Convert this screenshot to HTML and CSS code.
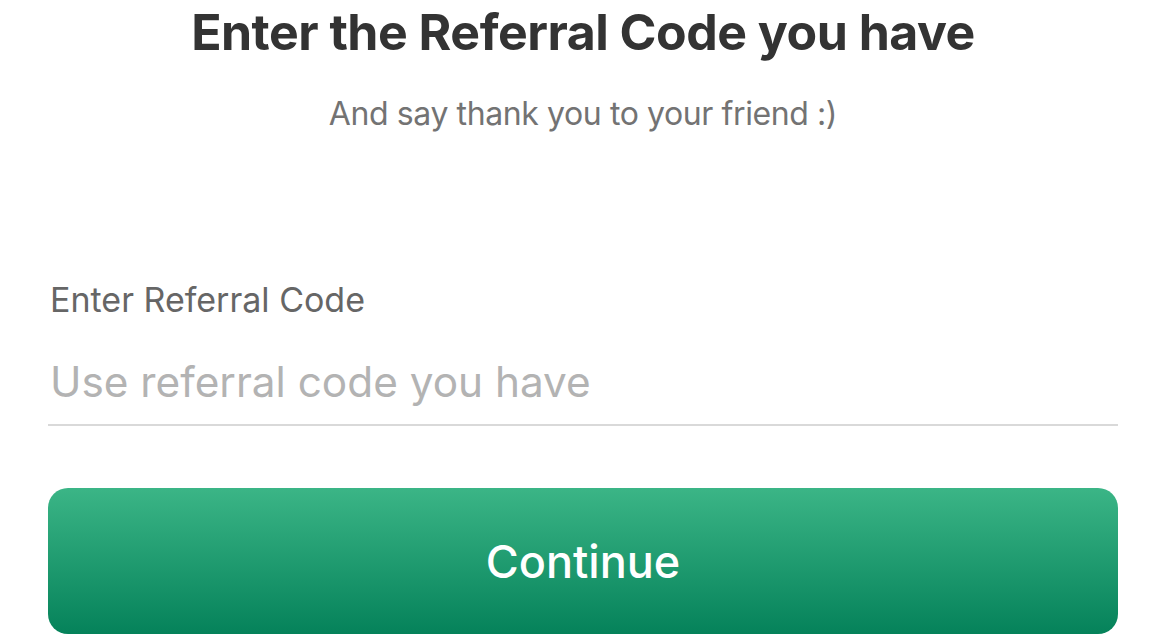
FILE: index.html
```html
<!DOCTYPE html>
<html>
    <head>
        <title>Referral Code</title>
        <link rel="stylesheet" href="styles.css">
    </head>
    <body>
        <main class="referral">
            <div class="referral-head">
                <h1 class="referral-title">Enter the Referral Code you have</h1>
                <p class="referral-subtitle">And say thank you to your friend :)</p>
            </div>
            <form class="referral-form">
                <label class="field">
                    <span class="field-label">Enter Referral Code</span>
                    <input class="field-input" type="text" placeholder="Use referral code you have">
                </label>
                <button class="btn-continue" type="button">Continue</button>
            </form>
        </main>
    </body>
</html>
```

FILE: styles.css
```css
:root {
    --text-dark: #333333;
    --text-muted: #737373;
    --text-label: #666666;
    --text-hint: #b3b3b3;
    --line: #d9d9d9;
    --green-top: #3bb586;
    --green-bottom: #05825a;
}

*, *::before, *::after {
    box-sizing: border-box;
}

body {
    margin: 0px;
    background-color: #ffffff;
    font-family: "Inter", "Roboto", sans-serif;
    color: var(--text-dark);
}

.referral {
    display: flex;
    flex-direction: column;
    padding: 0px 52px 0px 48px;
}

.referral-head {
    display: flex;
    flex-direction: column;
    align-items: center;
    text-align: center;
}

.referral-title {
    margin: 2px 0px 0px;
    font-size: 50px;
    font-weight: 700;
    line-height: 60px;
    letter-spacing: -0.5px;
}

.referral-subtitle {
    margin: 32px 0px 0px;
    font-size: 32px;
    line-height: 40px;
    color: var(--text-muted);
    letter-spacing: -0.4px;
}

.referral-form {
    display: flex;
    flex-direction: column;
    margin-top: 146px;
}

.field {
    display: flex;
    flex-direction: column;
}

.field-label {
    padding-left: 2px;
    font-size: 34px;
    line-height: 40px;
    color: var(--text-label);
}

.field-input {
    margin-top: 36px;
    padding: 0px 0px 16px 2px;
    border: none;
    border-bottom: 2px solid var(--line);
    outline: none;
    font-family: inherit;
    font-size: 42.3px;
    line-height: 52px;
    color: var(--text-dark);
    background: transparent;
}

.field-input::placeholder {
    color: var(--text-hint);
}

.btn-continue {
    margin-top: 62px;
    height: 146px;
    border: none;
    border-radius: 20px;
    background-image: linear-gradient(to bottom, var(--green-top), var(--green-bottom));
    color: #ffffff;
    font-family: inherit;
    font-size: 45px;
    font-weight: 500;
    cursor: pointer;
}
```
